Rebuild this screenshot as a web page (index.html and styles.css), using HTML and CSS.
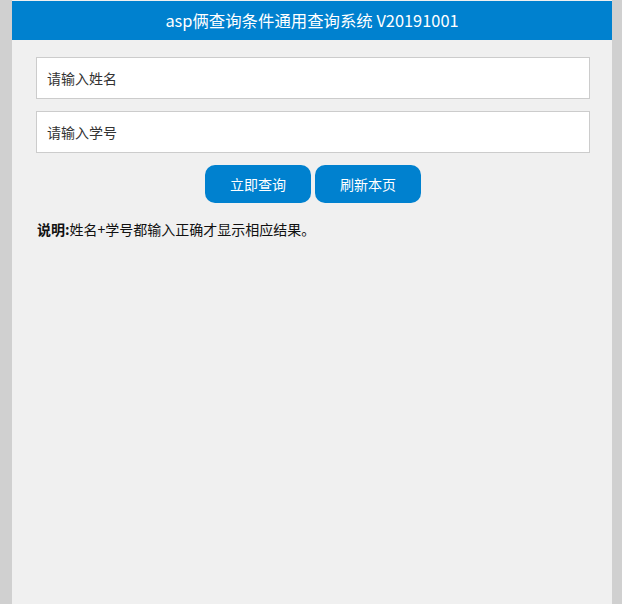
FILE: index.html
```html
<!DOCTYPE html>
<html lang="zh-CN">
<head>
  <meta charset="UTF-8" />
  <meta name="viewport" content="width=device-width,initial-scale=1" />
  <title>asp俩查询条件通用查询系统</title>
  <link rel="stylesheet" href="styles.css">
</head>
<body>
  <div class="wrap">
    <header class="title">asp俩查询条件通用查询系统 V20191001</header>
    <form class="search" onsubmit="return false;">
      <input type="text" name="xm" placeholder="请输入姓名" />
      <input type="text" name="xh" placeholder="请输入学号" />
      <div class="btns">
        <button type="submit">立即查询</button>
        <button type="button" onclick="location.reload();">刷新本页</button>
      </div>
    </form>
    <p class="note"><b>说明:</b>姓名+学号都输入正确才显示相应结果。</p>
  </div>
</body>
</html>
```

FILE: styles.css
```css
html, body {
  height: 100%;
}
body {
  margin: 0;
  background: #d0d0d0;
  font-family: "Microsoft YaHei", "Noto Sans CJK SC", sans-serif;
  font-size: 14px;
  color: #222;
}
.wrap {
  width: 600px;
  min-height: 100%;
  margin-left: 12px;
  background: #f0f0f0;
  box-sizing: border-box;
  padding-top: 1px;
}
.title {
  background: #0081cf;
  color: #fff;
  height: 39px;
  line-height: 39px;
  text-align: center;
  font-size: 16.4px;
}
.search {
  padding: 17px 22px 0 24px;
  margin: 0;
}
.search input {
  display: block;
  width: 100%;
  height: 42px;
  box-sizing: border-box;
  border: 1px solid #ccc;
  background: #fff;
  padding: 0 10px;
  margin-bottom: 12px;
  font-family: inherit;
  font-size: 14px;
  outline: none;
}
.search input::placeholder {
  color: #333;
}
.btns {
  display: flex;
  justify-content: center;
  gap: 4px;
}
.btns button {
  width: 106px;
  height: 38px;
  border: none;
  border-radius: 10px;
  background: #0081cf;
  color: #fff;
  font-family: inherit;
  font-size: 14px;
  cursor: pointer;
}
.note {
  margin: 16px 0 0 25px;
  line-height: 20px;
  color: #111;
}
```
